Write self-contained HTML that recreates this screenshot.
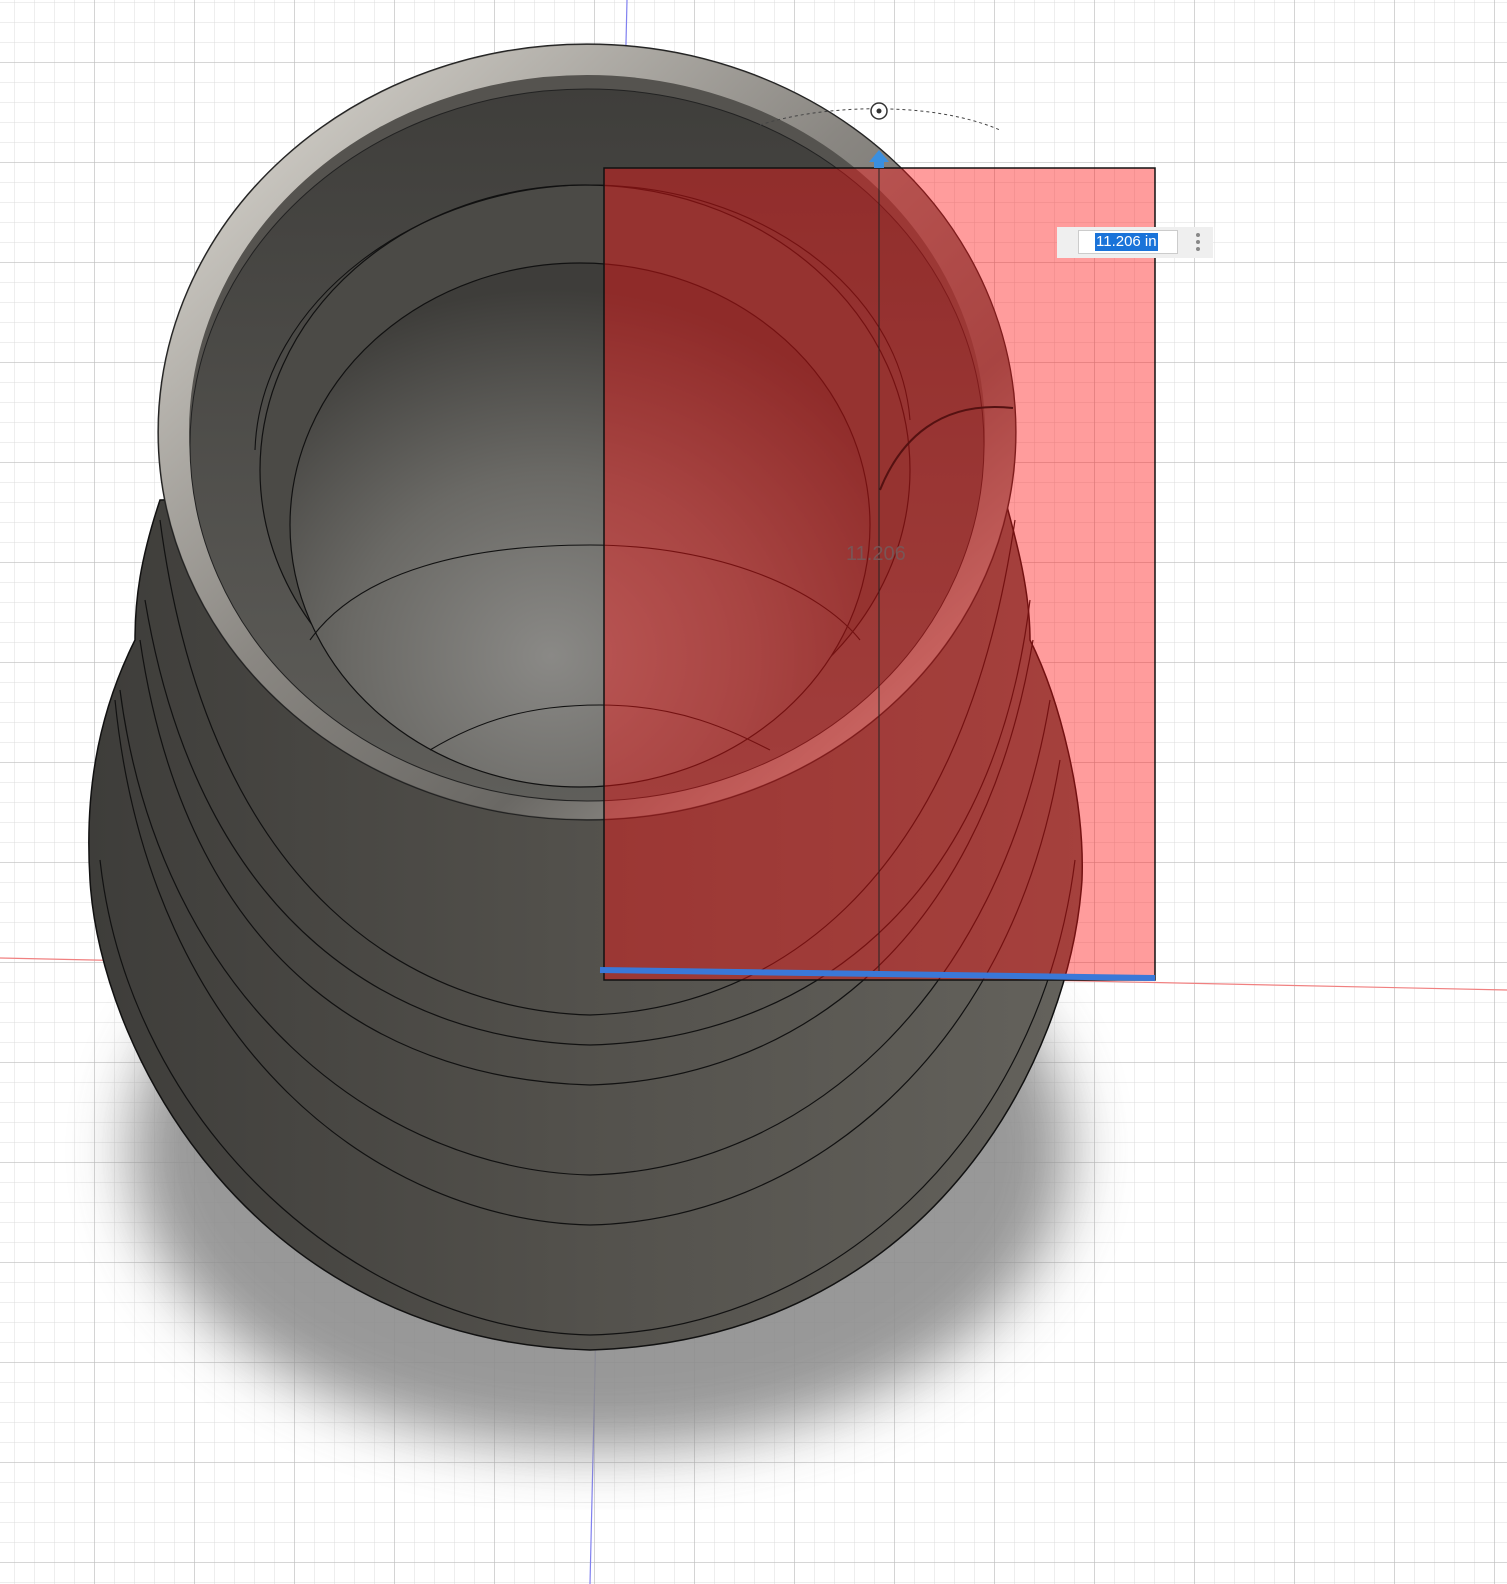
<!DOCTYPE html>
<html><head><meta charset="utf-8"><style>
html,body{margin:0;padding:0;background:#fff;width:1507px;height:1584px;overflow:hidden}
svg{display:block}
.inp{position:absolute;left:1057px;top:227px;width:156px;height:31px;background:#efefef;}
.box{position:absolute;left:1078px;top:230px;width:100px;height:24px;background:#fff;border:1px solid #ccc;box-sizing:border-box}
.sel{position:absolute;left:1095px;top:233px;height:18px;background:#1a73d9;color:#fff;font:15px "Liberation Sans",sans-serif;line-height:18px;padding:0 1px}
.dots{position:absolute;left:1196px;top:233px;width:4px}
.dots i{display:block;width:4px;height:4px;border-radius:2px;background:#888;margin-bottom:3px}
</style></head><body>
<svg width="1507" height="1584" viewBox="0 0 1507 1584">
<defs>
<pattern id="mn" width="20" height="20" patternUnits="userSpaceOnUse" x="-5" y="3"><path d="M20 0V20M0 20H20" stroke="#dcdcdc" stroke-width="1" fill="none"/></pattern>
<pattern id="mj" width="100" height="100" patternUnits="userSpaceOnUse" x="-5" y="63"><path d="M100 0V100M0 100H100" stroke="#bdbdbd" stroke-width="1.3" fill="none"/></pattern>
<linearGradient id="body" x1="0" x2="1"><stop offset="0" stop-color="#3e3d3a"/><stop offset="0.5" stop-color="#53514c"/><stop offset="1" stop-color="#64625c"/></linearGradient>
<radialGradient id="inner" cx="0.45" cy="0.75" r="0.7"><stop offset="0" stop-color="#8a8986"/><stop offset="0.5" stop-color="#6a6965"/><stop offset="1" stop-color="#3e3d3a"/></radialGradient>
<linearGradient id="wall" x1="0" y1="0" x2="0" y2="1"><stop offset="0" stop-color="#3f3e3b"/><stop offset="1" stop-color="#5f5e5a"/></linearGradient>
<linearGradient id="rim" x1="0" y1="0" x2="1" y2="1"><stop offset="0" stop-color="#e0ddd6"/><stop offset="0.45" stop-color="#8a8782"/><stop offset="0.7" stop-color="#6a6864"/><stop offset="1" stop-color="#c8c4be"/></linearGradient>
<filter id="bl"><feGaussianBlur stdDeviation="30"/></filter>
</defs>
<rect width="1507" height="1584" fill="url(#mn)"/>
<rect width="1507" height="1584" fill="url(#mj)"/>
<line x1="0" y1="958" x2="1507" y2="990" stroke="#f08080" stroke-width="1.2"/>
<line x1="627" y1="0" x2="590" y2="1584" stroke="#8080f0" stroke-width="1.2"/>
<ellipse cx="600" cy="1150" rx="470" ry="300" fill="#8d8d8d" filter="url(#bl)" opacity="0.9"/>
<path d="M160 500 C140 560 135 600 135 640 C95 720 85 800 90 880 C100 1050 250 1340 590 1350 C930 1340 1070 1060 1082 880 C1085 800 1060 700 1030 640 C1030 580 1010 520 1000 480 Z" fill="url(#body)" stroke="#111" stroke-width="1.5"/>
<g fill="none" stroke="#111" stroke-width="1.2">
<path d="M100 860 C130 1130 360 1330 590 1335 C830 1330 1040 1140 1075 860"/>
<path d="M115 700 C150 1050 380 1220 590 1225 C800 1220 1010 1060 1060 760"/>
<path d="M120 690 C160 1000 380 1170 590 1175 C800 1170 1000 1000 1050 700"/>
<path d="M140 640 C190 980 400 1080 590 1085 C780 1080 980 960 1033 640"/>
<path d="M145 600 C200 930 400 1040 590 1045 C780 1040 990 930 1030 600"/>
<path d="M160 520 C210 900 420 1010 590 1015 C760 1010 960 900 1015 520"/>
</g>
<ellipse cx="587" cy="432" rx="429" ry="388" fill="#55534f" stroke="#222" stroke-width="1.2"/>
<ellipse cx="587" cy="432" rx="413" ry="372" fill="none" stroke="url(#rim)" stroke-width="30"/>
<ellipse cx="587" cy="445" rx="397" ry="356" fill="url(#wall)" stroke="#222" stroke-width="1"/>
<ellipse cx="585" cy="470" rx="325" ry="285" fill="#4b4a46" stroke="#111" stroke-width="1.2"/>
<ellipse cx="580" cy="525" rx="290" ry="262" fill="url(#inner)" stroke="#111" stroke-width="1.2"/>
<g fill="none" stroke="#111" stroke-width="1.1">
<path d="M255 450 C260 300 420 185 590 185 C760 185 900 290 910 420"/>
<path d="M310 640 C360 570 470 545 590 545 C720 545 820 590 860 640"/>
<path d="M430 750 C480 720 530 705 600 705 C680 705 730 730 770 750"/>
</g>
<rect x="604" y="168" width="551" height="812" fill="rgba(255,20,20,0.42)" stroke="#111" stroke-width="1.5"/>
<line x1="879" y1="168" x2="879" y2="975" stroke="#222" stroke-width="1"/>
<path d="M880 490 C900 440 940 400 1013 408" fill="none" stroke="#511" stroke-width="2"/>
<text x="846" y="560" font-family="Liberation Sans,sans-serif" font-size="20" fill="#7a5555">11.206</text>
<line x1="600" y1="970" x2="1155" y2="978" stroke="#3a78d8" stroke-width="6"/>
<path d="M760 125 C820 105 930 100 1000 130" fill="none" stroke="#444" stroke-width="1" stroke-dasharray="3 3"/>
<circle cx="879" cy="111" r="8" fill="#fff" stroke="#333" stroke-width="1.5"/><circle cx="879" cy="111" r="2.5" fill="#333"/>
<path d="M869 162 L879 150 L889 162 L884 162 L884 168 L874 168 L874 162 Z" fill="#3a8fe0"/>
</svg>
<div class="inp"></div><div class="box"></div><div class="sel">11.206 in</div>
<div class="dots"><i></i><i></i><i></i></div>
</body></html>
